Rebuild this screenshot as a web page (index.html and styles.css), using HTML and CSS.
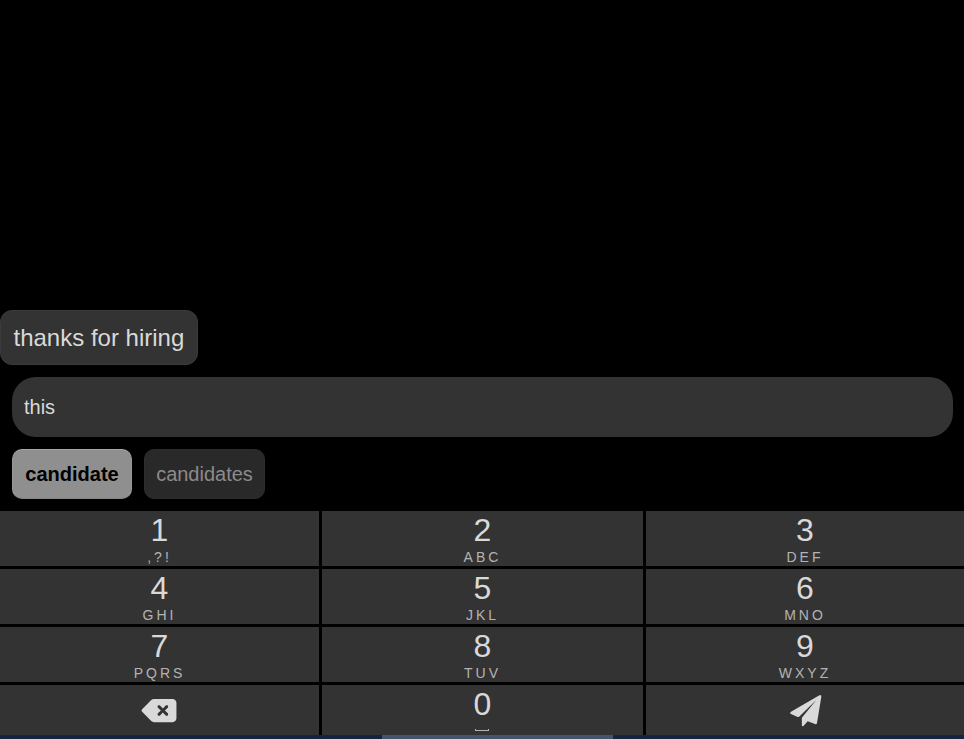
FILE: index.html
```html
<!DOCTYPE html>
<html lang="en">
<head>
<meta charset="utf-8">
<title>Keypad</title>
<link rel="stylesheet" href="styles.css">
</head>
<body>
<main class="phone">
  <section class="history"><div class="message">thanks for hiring</div></section>
  <div class="entry">this</div>
  <div class="suggestions">
    <button class="word word-selected">candidate</button>
    <button class="word">candidates</button>
  </div>
  <div class="keypad">
    <button class="key"><span class="digit">1</span><span class="letters">,?!</span></button>
    <button class="key"><span class="digit">2</span><span class="letters">ABC</span></button>
    <button class="key"><span class="digit">3</span><span class="letters">DEF</span></button>
    <button class="key"><span class="digit">4</span><span class="letters">GHI</span></button>
    <button class="key"><span class="digit">5</span><span class="letters">JKL</span></button>
    <button class="key"><span class="digit">6</span><span class="letters">MNO</span></button>
    <button class="key"><span class="digit">7</span><span class="letters">PQRS</span></button>
    <button class="key"><span class="digit">8</span><span class="letters">TUV</span></button>
    <button class="key"><span class="digit">9</span><span class="letters">WXYZ</span></button>
    <button class="key key-icon key-delete" aria-label="Delete"><svg class="icon-delete" viewBox="0 0 576 512"><path d="M576 128c0-35.300-28.700-64-64-64L205.300 64c-17 0-33.300 6.700-45.300 18.700L9.400 233.400c-6 6-9.400 14.100-9.400 22.600s3.400 16.600 9.400 22.600L160 429.300c12 12 28.300 18.700 45.300 18.700L512 448c35.300 0 64-28.700 64-64l0-256zM271 175c9.400-9.400 24.600-9.400 33.900 0l47 47 47-47c9.400-9.400 24.600-9.400 33.900 0s9.400 24.600 0 33.900l-47 47 47 47c9.400 9.400 9.400 24.600 0 33.900s-24.600 9.400-33.900 0l-47-47-47 47c-9.400 9.400-24.600 9.400-33.900 0s-9.400-24.600 0-33.900l47-47-47-47c-9.400-9.400-9.400-24.600 0-33.900z"/></svg></button>
    <button class="key"><span class="digit">0</span><span class="space-mark"></span></button>
    <button class="key key-icon" aria-label="Send"><svg class="icon-send" viewBox="0 0 96 96"><path d="M87 1.500Q94-2 94 5L81 84Q80 89 75 87L53 78.500L41 92Q36 96 35.500 90V68L79 15L28 64.500Q26 67 23 66L3 57Q-2 54 3 50Z"/></svg></button>
  </div>
  <div class="scroll-track"><div class="scroll-thumb"></div></div>
</main>
</body>
</html>
```
FILE: styles.css
```css
* { box-sizing: border-box; }
body { margin: 0; background: #000; font-family: Arial, "Liberation Sans", sans-serif; }
button { font-family: inherit; }
.phone { display: flex; flex-direction: column; height: 739px; overflow: hidden; color: #d9d9d9; }
.history { flex: 1; display: flex; flex-direction: column; justify-content: flex-end; align-items: flex-start; padding-bottom: 12px; }
.message { height: 55px; padding: 0 12.5px; border: 1px solid #3b3b3b; border-radius: 12px; background: #333; font-size: 24px; line-height: 54px; white-space: nowrap; width: 198px; }
.entry { height: 60px; margin: 0 11px 12px 12px; padding: 0 12px; border-radius: 24px; background: #333; font-size: 20px; line-height: 60px; }
.suggestions { display: flex; gap: 12px; height: 50px; margin: 0 12px 12px; }
.word { width: 121px; padding: 0; border: 1px solid #2d2d2d; border-radius: 10px; background: #292929; color: #8b8b8b; font-size: 20px; }
.word-selected { width: 120px; border-color: #a7a7a7 #999 #858585; background: #8f8f8f; color: #000; font-weight: bold; }
.keypad { display: grid; grid-template-columns: 319px 321px 318px; grid-template-rows: 55px 55px 55px 50px; gap: 3px; }
.key { display: flex; flex-direction: column; align-items: center; justify-content: flex-start; padding: 0; border: 0; background: #333; color: #d9d9d9; }
.digit { font-size: 32px; line-height: 38px; }
.letters { color: #b3b3b3; font-size: 14px; line-height: 16px; letter-spacing: 3px; }
.space-mark { width: 14px; height: 2px; margin: 6px 2px 0 0; border: 1px solid #b3b3b3; border-top: 0; }
.key-icon { justify-content: center; }
.key-delete { padding-right: 1px; }
.key svg { fill: #d9d9d9; }
.icon-delete { width: 36px; height: 31px; }
.icon-send { width: 32px; height: 32px; margin: 1px 0 0 1px; }
.scroll-track { height: 4px; background: #17233f; }
.scroll-thumb { width: 231px; height: 4px; margin-left: 382px; background: #47536b; }
```
